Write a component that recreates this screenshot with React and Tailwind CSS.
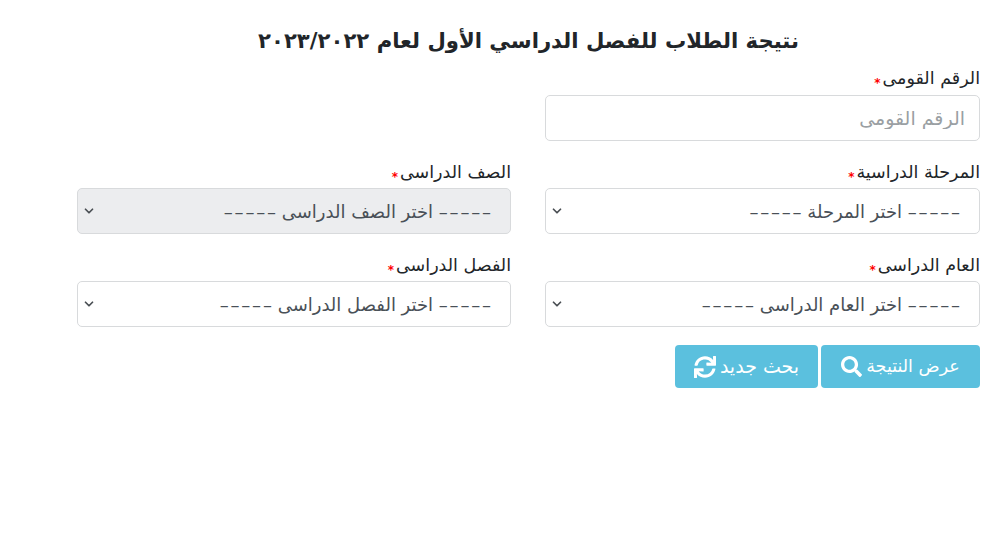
import React from "react";
import { ChevronDown } from "lucide-react";
import { FaSearch, FaSync } from "react-icons/fa";

const fontStack = { fontFamily: '"DejaVu Sans", "Noto Sans", sans-serif' };

// the reference font draws wide, separated dashes
const DASHES = "–\u200A–\u200A–\u200A–\u200A–";

const Label = ({ children }) => (
  <label className="block h-[19px] text-[17.5px] leading-[19px] text-[#212529]">
    {children}
    <span className="text-[#ff0000] text-[12px] font-bold mr-0.5 align-[-3px]">*</span>
  </label>
);

const SelectField = ({ label, placeholder, disabled }) => (
  <div>
    <Label>{label}</Label>
    <div className="relative mt-1.5">
      <select
        disabled={disabled}
        defaultValue=""
        className={`appearance-none opacity-100 w-full h-[46px] rounded-[5px] border border-[#d8dadc] pr-[19px] pl-8 text-[18px] text-[#495057] ${
          disabled ? "bg-[#ecedef]" : "bg-white"
        }`}
      >
        <option value="">{`${DASHES} ${placeholder} ${DASHES}`}</option>
      </select>
      <ChevronDown
        size={14}
        strokeWidth={3}
        className="absolute left-[5px] top-4 text-[#4a4f54] pointer-events-none"
      />
    </div>
  </div>
);

export default function App() {
  return (
    <div dir="rtl" style={fontStack} className="min-h-[557px] bg-white pr-5 pl-[77px] pt-[27px]">
      <h1 className="text-center text-[21.2px] leading-[28px] font-bold text-[#212529]">
        نتيجة الطلاب للفصل الدراسي الأول لعام ٢٠٢٣/٢٠٢٢
      </h1>

      <div className="mt-[14px] grid grid-cols-[435px_434px] gap-x-[34px]">
        <div>
          <Label>الرقم القومى</Label>
          <input
            placeholder="الرقم القومى"
            className="block mt-[7px] w-full h-[46px] rounded-[5px] border border-[#d8dadc] bg-white px-3.5 text-[19px] placeholder:text-[#9a9fa3]"
          />
        </div>
        <div />
      </div>

      <div className="mt-[22px] grid grid-cols-[435px_434px] gap-x-[34px] gap-y-[22px]">
        <SelectField label="المرحلة الدراسية" placeholder="اختر المرحلة" />
        <SelectField label="الصف الدراسى" placeholder="اختر الصف الدراسى" disabled />
        <SelectField label="العام الدراسى" placeholder="اختر العام الدراسى" />
        <SelectField label="الفصل الدراسى" placeholder="اختر الفصل الدراسى" />
      </div>

      <div className="mt-[18px] flex gap-[3px]">
        <button className="flex items-center justify-center gap-1 w-[159px] h-[43px] rounded-[4px] bg-[#5bc0de] text-white text-[17.5px]">
          عرض النتيجة
          <FaSearch size={21} />
        </button>
        <button className="flex items-center justify-center gap-1 w-[143px] h-[43px] rounded-[4px] bg-[#5bc0de] text-white text-[19px]">
          بحث جديد
          <FaSync size={22} />
        </button>
      </div>
    </div>
  );
}
